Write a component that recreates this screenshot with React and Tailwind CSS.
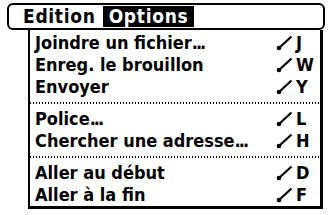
import React from "react";

const groups = [
  [
    ["Joindre un fichier", "J", true],
    ["Enreg. le brouillon", "W"],
    ["Envoyer", "Y"],
  ],
  [
    ["Police", "L", true],
    ["Chercher une adresse", "H", true],
  ],
  [
    ["Aller au début", "D"],
    ["Aller à la fin", "F"],
  ],
];

function Stroke() {
  return (
    <svg width="17" height="16" viewBox="0 0 17 16" className="shrink-0">
      <line x1="3" y1="13" x2="15.5" y2="1.5" stroke="black" strokeWidth="2.2" />
      <circle cx="3" cy="13" r="2.3" fill="black" />
    </svg>
  );
}

function Item({ label, cmd, dots }) {
  return (
    <div className="flex items-center h-[22px] pl-[5px]">
      <span className="flex-1">
        {label}
        {dots && <span className="tracking-[-2px]">...</span>}
      </span>
      <div className="flex items-center w-[44px] gap-[3px]">
        <Stroke />
        <span>{cmd}</span>
      </div>
    </div>
  );
}

export default function App() {
  return (
    <div
      className="w-[329px] h-[215px] bg-white text-black font-bold text-[18px] leading-none pt-[3px] pl-[7px]"
      style={{ fontFamily: '"DejaVu Sans Condensed", "DejaVu Sans", sans-serif' }}
    >
      <div className="w-[318px] h-[27px] border-2 border-black rounded-[6px] flex items-stretch p-[1px] pl-[9px] text-[19px] tracking-[0.7px]">
        <div className="flex items-center pl-[5px] pr-[7px]">Edition</div>
        <div className="flex items-center px-[6px] bg-black text-white">Options</div>
      </div>
      <div className="ml-[21px] w-[295px] border-l-2 border-r-[3px] border-b-[3px] border-black pt-[2px]">
        {groups.map((g, i) => (
          <div key={i}>
            {i > 0 && (
              <div className="h-[10px] flex items-center">
                <div className="w-full h-[2px] bg-[repeating-linear-gradient(90deg,black_0_1.5px,transparent_1.5px_3px)]" />
              </div>
            )}
            {g.map(([label, cmd, dots]) => (
              <Item key={label} label={label} cmd={cmd} dots={dots} />
            ))}
          </div>
        ))}
      </div>
    </div>
  );
}
